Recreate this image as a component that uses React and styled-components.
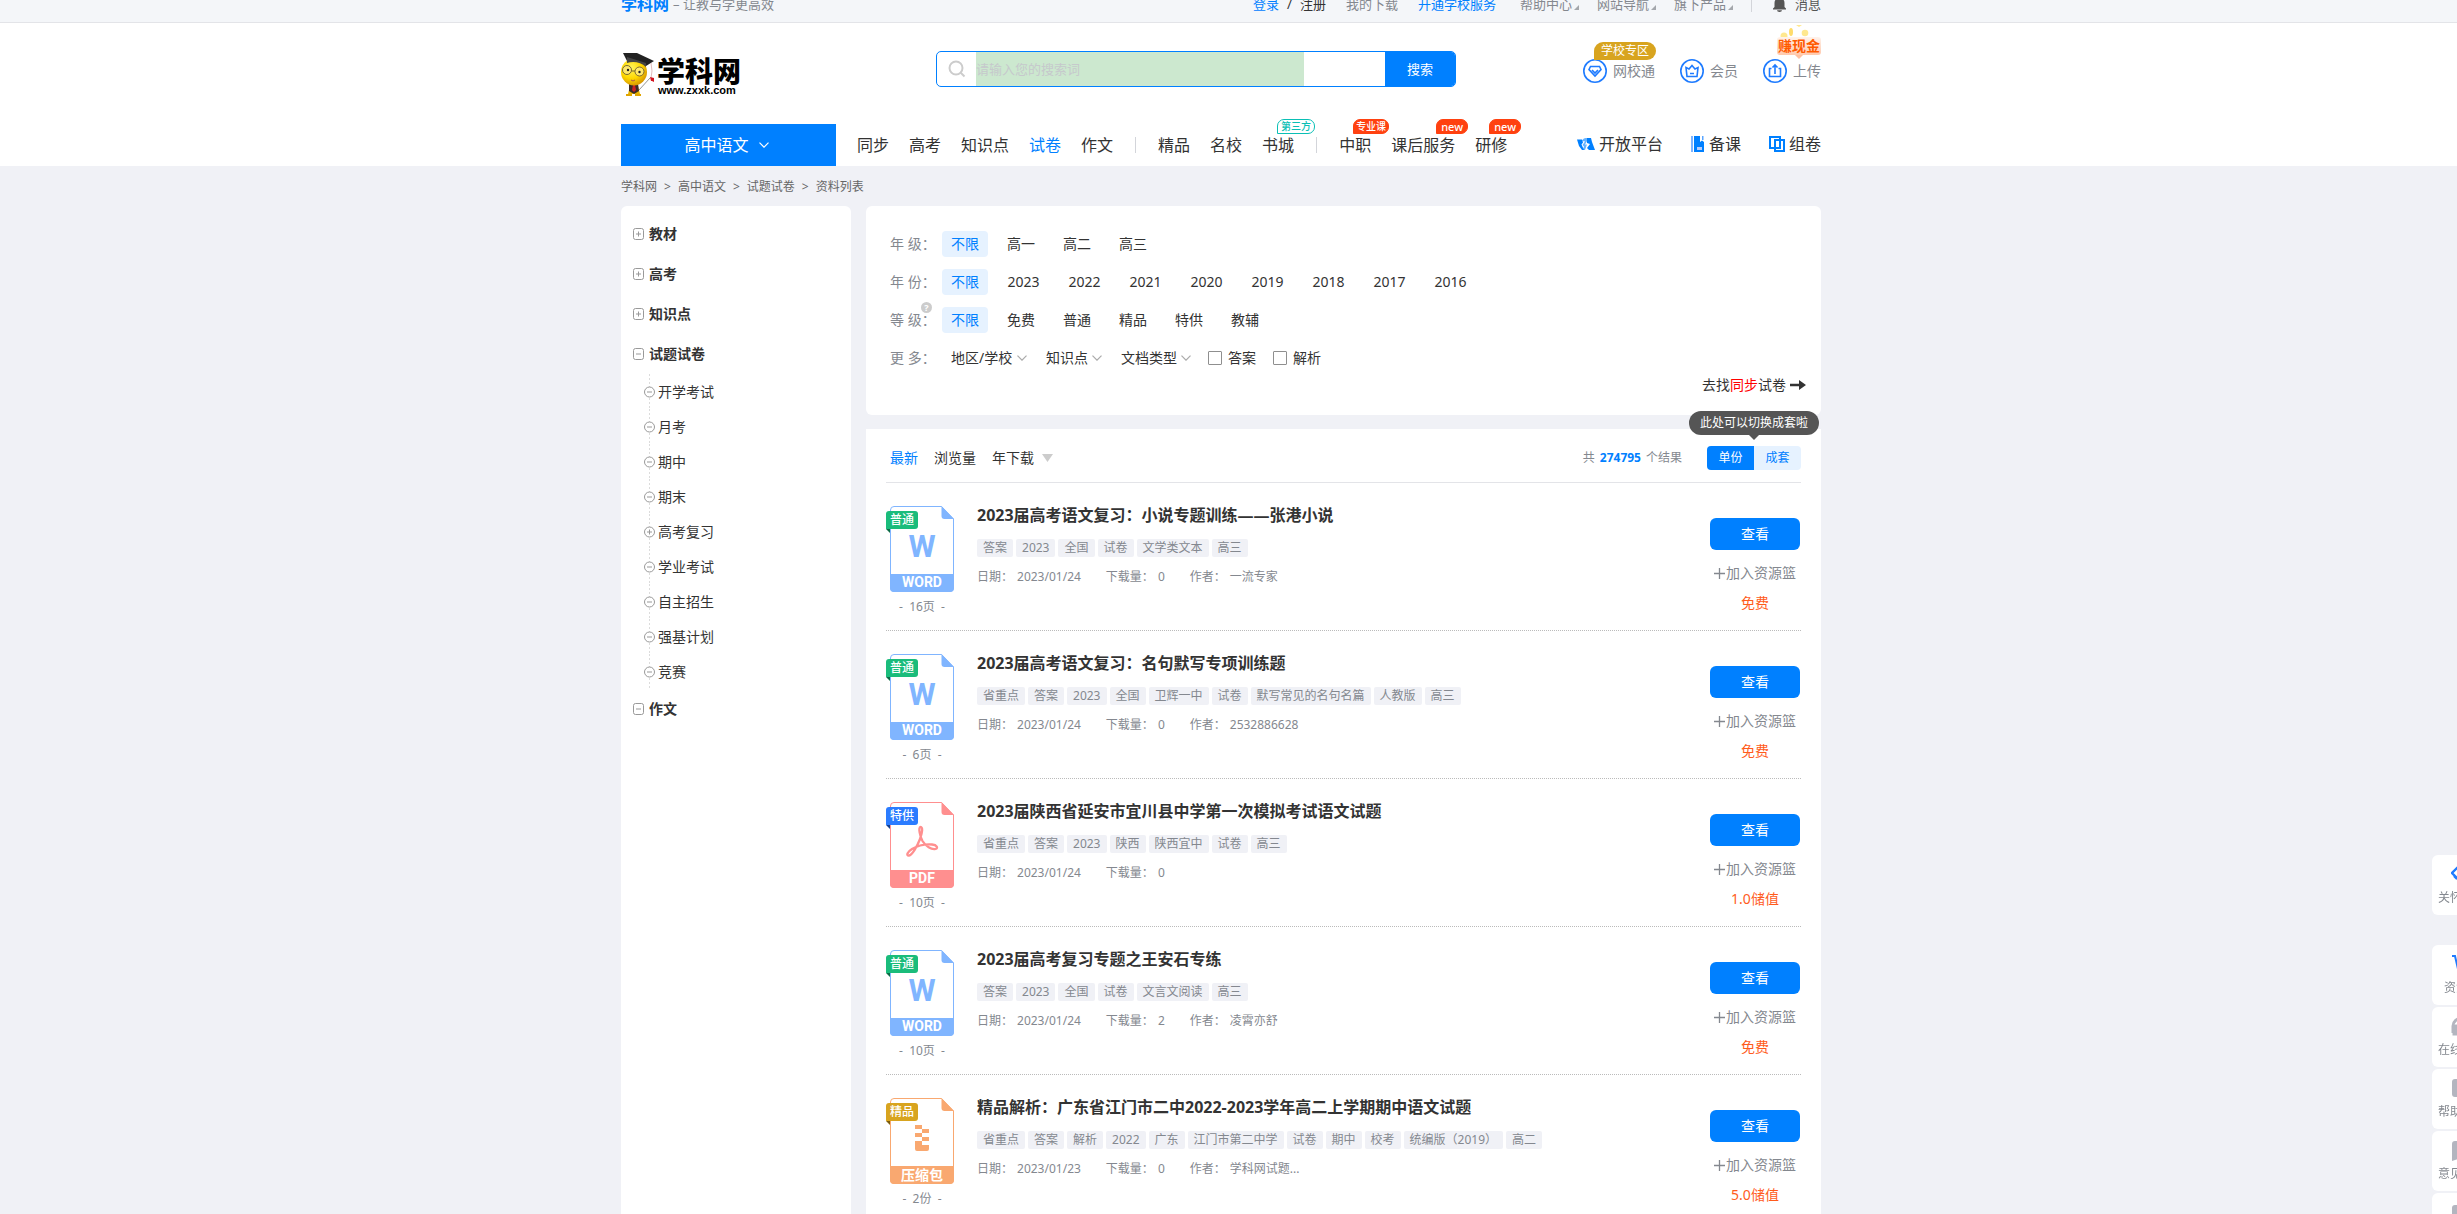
import React, { useState } from 'react';
import styled, { createGlobalStyle, css } from 'styled-components';

const BLUE = '#0080ff';
const INK = '#333333';
const GREY = '#84888f';
const LINE = '#e3e4e8';

const GlobalStyle = createGlobalStyle`
  * { box-sizing: border-box; }
  html { scrollbar-width: none; background: #f0f1f6; }
  body {
    margin: 0;
    color: ${INK};
    font: 14px/20px "Noto Sans", "Noto Sans CJK SC", sans-serif;
    overflow-x: hidden;
  }
  button, input, select { font: inherit; color: inherit; margin: 0; padding: 0; }
  button { border: 0; background: none; cursor: pointer; }
  a { color: inherit; text-decoration: none; }
  ul, ol { list-style: none; margin: 0; padding: 0; }
  h3, p { margin: 0; }
  svg { display: block; flex: none; }
`;

const Band = styled.div`
  padding-right: 15px;
  background: ${(p) => p.$bg || 'transparent'};
`;

const Wrap = styled.div`
  width: 100%;
  max-width: 1200px;
  margin: 0 auto;
`;

/* ---------- top bar ---------- */

const TopBand = styled(Band)`
  border-bottom: 1px solid ${LINE};
  height: 23px;
  overflow: hidden;
`;

const TopRow = styled(Wrap)`
  display: flex;
  justify-content: space-between;
  align-items: center;
  height: 36px;
  margin-top: -14px;
  font-size: 13px;
  color: ${GREY};
`;

const Slogan = styled.div`
  display: flex;
  align-items: center;
  gap: 4px;
`;

const SloganBrand = styled.a`
  font-size: 16px;
  font-weight: 700;
  color: ${BLUE};
`;

const TopLinks = styled.nav`
  display: flex;
  align-items: center;
  gap: 20px;
`;

const TopLink = styled.a`
  color: ${(p) => p.$color || 'inherit'};
`;

const LoginPair = styled.span`
  display: flex;
  gap: 8px;
  color: ${INK};
`;

const MenuGroup = styled.span`
  display: flex;
  align-items: center;
  gap: 18px;
  margin-left: 4px;
`;

const CornerLink = styled.a`
  display: flex;
  align-items: flex-end;
  gap: 2px;
  &::after {
    content: '';
    margin-bottom: 4px;
    border-left: 5px solid transparent;
    border-bottom: 5px solid #a4a7ac;
  }
`;

const Divider = styled.i`
  width: 1px;
  height: 16px;
  background: #d3d5da;
`;

const Notice = styled.a`
  display: flex;
  align-items: center;
  gap: 8px;
  color: #555;
`;

/* ---------- header ---------- */

const HeaderRow = styled(Wrap)`
  display: flex;
  align-items: center;
  height: 101px;
  padding-bottom: 10px;
`;

const Logo = styled.a`
  display: flex;
  width: 315px;
  padding-top: 12px;
`;

const Search = styled.form`
  display: flex;
  width: 520px;
  height: 36px;
  border: 1px solid ${BLUE};
  border-radius: 5px;
  overflow: hidden;
  background: #fff;
`;

const SearchIcon = styled.label`
  display: flex;
  align-items: center;
  justify-content: center;
  width: 39px;
`;

const SearchInput = styled.input`
  width: 328px;
  border: 0;
  outline: 0;
  background: #cce8cf;
  font-size: 13px;
  &::placeholder { color: #c6c9cc; opacity: 1; }
`;

const SearchButton = styled.button`
  width: 70px;
  margin-left: auto;
  background: ${BLUE};
  color: #fff;
  font-size: 13px;
`;

const Services = styled.nav`
  display: flex;
  gap: 25px;
  margin-left: auto;
  padding-top: 4px;
`;

const Service = styled.a`
  position: relative;
  z-index: 0;
  display: flex;
  align-items: center;
  gap: 6px;
  color: ${GREY};
`;

const SchoolBadge = styled.span`
  position: absolute;
  left: 11px;
  top: -17px;
  padding: 0 7px;
  border-radius: 9px 9px 9px 0;
  background: #d8a41f;
  color: #fff;
  font-size: 12px;
  line-height: 18px;
  white-space: nowrap;
`;

const CashBadge = styled.span`
  position: absolute;
  right: 0;
  top: -22px;
  border-radius: 3px;
  background: linear-gradient(#fff3ec, #ffc9ad);
  color: #ff5a00;
  font-size: 14px;
  font-weight: 700;
  line-height: 18px;
  padding: 0 1px;
  white-space: nowrap;
  &::after {
    content: '';
    position: absolute;
    left: 18px;
    top: 18px;
    border: 4px solid transparent;
    border-top-color: #ffc0a0;
    border-bottom: 0;
  }
  svg { position: absolute; left: 0; top: -13px; z-index: -1; }
`;

/* ---------- main nav ---------- */

const NavRow = styled(Wrap)`
  display: flex;
  align-items: stretch;
  height: 42px;
  font-size: 16px;
`;

const SubjectButton = styled.button`
  display: flex;
  align-items: center;
  justify-content: center;
  gap: 10px;
  width: 215px;
  padding-right: 4px;
  background: ${BLUE};
  color: #fff;
`;

const NavList = styled.nav`
  display: flex;
  align-items: center;
  gap: 20px;
  margin-left: 21px;
  ${Divider} { margin: 0 2px; }
`;

const NavLink = styled.a`
  position: relative;
  color: ${(p) => (p.$active ? BLUE : INK)};
`;

const NavBadge = styled.span`
  position: absolute;
  left: ${(p) => p.$left}px;
  top: -16px;
  padding: 0 ${(p) => (p.$teal ? 3 : p.$latin ? 4 : 2)}px;
  border: 1px solid ${(p) => (p.$teal ? '#0abfb5' : '#ff4110')};
  border-radius: 7px 7px 7px 0;
  background: ${(p) => (p.$teal ? '#fff' : '#ff4110')};
  color: ${(p) => (p.$teal ? '#0abfb5' : '#fff')};
  font-size: ${(p) => (p.$latin ? 11 : 10)}px;
  font-weight: 500;
  line-height: 13px;
  white-space: nowrap;
`;

const Tools = styled.nav`
  display: flex;
  align-items: center;
  gap: 28px;
  margin-left: auto;
  padding-bottom: 3px;
`;

const Tool = styled.a`
  display: flex;
  align-items: center;
  gap: 4px;
`;

/* ---------- page body ---------- */

const Crumbs = styled(Wrap)`
  display: flex;
  align-items: center;
  gap: 7px;
  height: 40px;
  padding-top: 2px;
  font-size: 12px;
  color: #666;
`;

const Columns = styled(Wrap)`
  display: flex;
  gap: 15px;
`;

const Sidebar = styled.aside`
  width: 230px;
  flex: none;
  padding: 8px 12px;
  border-radius: 6px;
  background: #fff;
`;

const TreeItem = styled.a`
  display: flex;
  align-items: center;
  gap: 5px;
  height: 40px;
  font-weight: 700;
`;

const TreeSub = styled.a`
  display: flex;
  align-items: center;
  gap: 3px;
  height: 35px;
  margin-left: 11px;
  background: linear-gradient(#dcdcdc 50%, transparent 50%) 5px 0 / 1px 4px repeat-y;
`;

const Main = styled.main`
  flex: 1;
  min-width: 0;
`;

const Filters = styled.section`
  display: flex;
  flex-direction: column;
  gap: 12px;
  height: 209px;
  margin-bottom: 14px;
  padding: 25px 15px 0 24px;
  border-radius: 6px;
  background: #fff;
`;

const FilterRow = styled.div`
  display: flex;
  align-items: center;
  gap: 10px;
  height: 26px;
`;

const FilterLabel = styled.span`
  position: relative;
  width: 42px;
  white-space: nowrap;
  color: ${GREY};
`;

const Help = styled.span`
  position: absolute;
  left: 31px;
  top: -8px;
  width: 11px;
  height: 11px;
  border-radius: 50%;
  background: #ccc;
  color: #fff;
  font-size: 9px;
  font-weight: 700;
  line-height: 11px;
  text-align: center;
`;

const Chip = styled.button`
  min-width: ${(p) => (p.$wide ? 51 : 46)}px;
  height: 26px;
  border-radius: 4px;
  ${(p) => p.$on && css`background: #e6f2ff; color: ${BLUE};`}
`;

const MoreRow = styled(FilterRow)`
  gap: 19px;
`;

const SelectBox = styled.span`
  display: grid;
  align-items: center;
  select {
    grid-area: 1 / 1;
    appearance: none;
    border: 0;
    background: none;
    padding-right: 14px;
    outline: 0;
  }
  svg { grid-area: 1 / 1; justify-self: end; pointer-events: none; }
`;

const Check = styled.label`
  display: flex;
  align-items: center;
  gap: 6px;
  margin-left: -2px;
  input {
    appearance: none;
    width: 14px;
    height: 14px;
    border: 1px solid #8f8f8f;
    border-radius: 1px;
    background: #fff;
  }
  input:checked { background: ${BLUE}; }
`;

const SyncLink = styled.a`
  display: flex;
  align-items: center;
  gap: 4px;
  align-self: flex-end;
  margin-top: -8px;
  em { font-style: normal; color: #ff0000; }
`;

const Results = styled.section`
  padding: 0 20px;
  background: #fff;
`;

const SortBar = styled.div`
  display: flex;
  align-items: center;
  height: 54px;
  padding: 4px 0 0 4px;
  border-bottom: 1px solid ${LINE};
`;

const SortButton = styled.button`
  display: flex;
  align-items: center;
  gap: 8px;
  margin-right: 16px;
  color: ${(p) => (p.$on ? BLUE : INK)};
`;

const Count = styled.p`
  display: flex;
  gap: 5px;
  margin-left: auto;
  margin-right: 25px;
  font-size: 12px;
  color: ${GREY};
  strong { color: ${BLUE}; }
`;

const Segment = styled.div`
  position: relative;
  display: flex;
  border-radius: 4px;
`;

const SegmentButton = styled.button`
  width: 47px;
  height: 24px;
  font-size: 12px;
  background: ${(p) => (p.$on ? BLUE : '#e6f2ff')};
  color: ${(p) => (p.$on ? '#fff' : BLUE)};
  &:first-child { border-radius: 4px 0 0 4px; }
  &:last-of-type { border-radius: 0 4px 4px 0; }
`;

const Tooltip = styled.span`
  position: absolute;
  left: 50%;
  bottom: 35px;
  transform: translateX(-50%);
  padding: 0 11px;
  border-radius: 12px;
  background: #555;
  color: #fff;
  font-size: 12px;
  line-height: 24px;
  white-space: nowrap;
  &::after {
    content: '';
    position: absolute;
    left: 50%;
    top: 24px;
    margin-left: -5px;
    border: 5px solid transparent;
    border-top-color: #555;
    border-bottom: 0;
  }
`;

const Item = styled.li`
  display: flex;
  height: 148px;
  padding: 23px 0 0 4px;
  border-bottom: 1px dotted #bbb;
`;

const Cover = styled.div`
  position: relative;
  width: 64px;
  margin-right: 23px;
  font-size: 12px;
  text-align: center;
  color: ${GREY};
`;

const PageCount = styled.p`
  margin-top: 5px;
  white-space: nowrap;
`;

const Level = styled.span`
  position: absolute;
  left: -4px;
  top: 5px;
  width: 32px;
  border-radius: 3px 3px 3px 0;
  background: ${(p) => p.$c[0]};
  color: #fff;
  font-weight: 500;
  line-height: 18px;
  &::after {
    content: '';
    position: absolute;
    left: 0;
    top: 18px;
    border-top: 4px solid ${(p) => p.$c[1]};
    border-left: 4px solid transparent;
  }
`;

const Info = styled.div`
  flex: 1;
  min-width: 0;
`;

const Title = styled.h3`
  font-size: 16px;
  line-height: 18px;
  font-weight: 700;
`;

const Tags = styled.ul`
  display: flex;
  gap: 3px;
  margin-top: 15px;
`;

const Tag = styled.li`
  padding: 0 6px;
  border-radius: 2px;
  background: #f0f1f6;
  color: ${GREY};
  font-size: 12px;
  line-height: 18px;
`;

const Meta = styled.p`
  display: flex;
  gap: 25px;
  margin-top: 10px;
  font-size: 12px;
  color: ${GREY};
  span { display: flex; gap: 4px; }
`;

const Actions = styled.div`
  display: flex;
  flex-direction: column;
  align-items: center;
  width: 91px;
  padding: 12px 1px 0 0;
`;

const ViewButton = styled.button`
  width: 90px;
  height: 32px;
  border-radius: 6px;
  background: ${BLUE};
  color: #fff;
`;

const AddButton = styled.button`
  display: flex;
  align-items: center;
  gap: 1px;
  margin-top: 13px;
  line-height: 20px;
  color: ${GREY};
`;

const Price = styled.span`
  margin-top: 10px;
  color: #ff5c1c;
`;

/* ---------- floating tools ---------- */

const Dock = styled.div`
  position: fixed;
  right: -35px;
  top: 855px;
  display: flex;
  flex-direction: column;
  gap: 2px;
`;

const DockButton = styled.button`
  display: flex;
  flex-direction: column;
  align-items: center;
  gap: 3px;
  width: 60px;
  height: 60px;
  padding-top: 10px;
  border-radius: 6px;
  background: #fff;
  color: ${GREY};
  font-size: 12px;
  margin-bottom: ${(p) => (p.$apart ? 28 : 0)}px;
`;

/* ---------- drawings ---------- */

const Chevron = ({ color = '#aaa', w = 10, h = 6 }) => (
  <svg width={w} height={h} viewBox="0 0 10 6" fill="none" stroke={color} strokeWidth="1.2">
    <path d="M.5.7 5 5.2 9.5.7" />
  </svg>
);

const Bell = () => (
  <svg width="15" height="15" viewBox="0 0 15 15" fill="#555">
    <path d="M7.500 0a1.200 1.200 0 0 1 1.200 1.300A4.800 4.800 0 0 1 12.500 6v4l1.500 1.500V12.500H1v-1L2.500 10V6a4.800 4.800 0 0 1 3.800-4.700A1.200 1.200 0 0 1 7.500 0zM5 13.200h5a2.500 1.800 0 0 1-5 0z" />
  </svg>
);

const BrandLogo = () => (
  <svg width="120" height="46" viewBox="0 0 120 46" role="img" aria-label="学科网">
    <defs>
      <radialGradient id="face" cx="40%" cy="35%" r="65%">
        <stop offset="0" stopColor="#fff45c" />
        <stop offset=".6" stopColor="#ffd900" />
        <stop offset="1" stopColor="#d99a00" />
      </radialGradient>
    </defs>
    <path d="M9 34h8l2 8H7z" fill="#e8b400" />
    <path d="M8 32h9l1 7-5 3-5-3z" fill="#3a2a28" />
    <path d="M12 33h2l1 5-2 2-2-2z" fill="#c22" />
    <path d="M5 43h6M14 43h6" stroke="#e0a400" strokeWidth="2.200" fill="none" />
    <path d="M18 38l11-12" stroke="#777" strokeWidth=".8" />
    <ellipse cx="13" cy="20" rx="13" ry="13.500" fill="url(#face)" />
    <path d="M2 1 16 1l17 8-8 5C21 9 12 8 6 9z" fill="#222" />
    <path d="M6 5l19 6v4C20 10 12 9 6 11z" fill="#444" />
    <path d="M30 11l1 8-1 7" stroke="#d9a9a9" strokeWidth=".8" fill="none" />
    <path d="M29 25l4 1 0 4-2-1-1 0z" fill="#d3141f" />
    <g fill="#ffe96b" stroke="#6a5a30" strokeWidth=".9">
      <circle cx="6" cy="18" r="4.500" />
      <circle cx="18.500" cy="19.500" r="4.500" />
      <path d="M10.500 19h3.500" />
    </g>
    <circle cx="7" cy="18" r="1.200" fill="#222" />
    <circle cx="18.500" cy="20" r="1.200" fill="#222" />
    <path d="M10 28q2 2 4 0" stroke="#a55" fill="none" />
    <text x="36" y="30" fontFamily="Noto Sans CJK SC" fontWeight="900" fontSize="28">学科网</text>
    <text x="37" y="42" fontFamily="Liberation Sans" fontWeight="700" fontSize="11">www.zxxk.com</text>
  </svg>
);

const Ring = ({ children }) => (
  <svg width="24" height="24" viewBox="0 0 24 24" fill="none" stroke="#1e7bff" strokeWidth="1.600">
    <circle cx="12" cy="12" r="11.200" />
    {children}
  </svg>
);

const Coins = () => (
  <svg width="45" height="20" viewBox="0 0 45 20" fill="#ffe88f">
    <circle cx="7" cy="12" r="3.500" />
    <ellipse cx="14" cy="8" rx="2" ry="4" fill="#ffdc6b" />
    <circle cx="28" cy="9" r="3.300" />
    <path d="M19 1h6l-3 2z" />
  </svg>
);

const OpenIcon = () => (
  <svg width="18" height="14" viewBox="0 0 18 14" fill={BLUE}>
    <path d="M0 2.500h5l1 3-1.500 2L7 13H5L2 9z" />
    <path d="M5 4c1-3 5-4 6-1.500L8 7.500h2L8 13H5.500L7 9.500 5.500 8 8 4.500z" opacity=".6" />
    <path d="M10 1h4l1 4 3 8h-6l-2-2 3-4-3-1z" />
  </svg>
);

const LessonIcon = () => (
  <svg width="14" height="16" viewBox="0 0 14 16">
    <path d="M0 0h2v16H0z" fill="#7fb4ff" />
    <path d="M3 0h6v6l2-1.500L13 6v10H3z" fill={BLUE} />
    <path d="M11 0h1.500v4H11z" fill="#5aa5ff" />
    <path d="M6 11h5v3H6z" fill="#b9cdfa" />
  </svg>
);

const PaperIcon = () => (
  <svg width="16" height="16" viewBox="0 0 16 16" fill="none" stroke={BLUE} strokeWidth="2">
    <path d="M1 1h10v11H1z" />
    <path d="M6 4h9v11H6z" />
  </svg>
);

const TreeMark = ({ round, open }) => (
  <svg width="11" height="12" viewBox="0 0 11 12" fill="#fff" stroke="#999">
    {round ? <circle cx="5.500" cy="6" r="5" /> : <rect x=".5" y=".5" width="10" height="11" rx="2" />}
    <path d={open ? 'M3 6h5' : 'M3 6h5M5.500 3.500v5'} />
  </svg>
);

const DOC = {
  word: { color: '#80b5ff', label: 'WORD' },
  pdf: { color: '#ff8f8f', label: 'PDF' },
  zip: { color: '#f9a870', label: '压缩包' },
};

const DocIcon = ({ type }) => {
  const { color, label } = DOC[type];
  return (
    <svg width="64" height="86" viewBox="0 0 64 86">
      <path d="M4 .5h47.500l12 12.500V82a3.500 3.500 0 0 1-3.500 3.500H4A3.500 3.500 0 0 1 .5 82V4A3.500 3.500 0 0 1 4 .5z" fill="#fff" stroke={color} />
      <path d="M51.500 0 64 13H54.500a3 3 0 0 1-3-3z" fill={color} />
      <path d="M0 68h64v14a4 4 0 0 1-4 4H4a4 4 0 0 1-4-4z" fill={color} />
      {type === 'word' && (
        <text x="32" y="51" textAnchor="middle" fontFamily="Roboto" fontWeight="700" fontSize="31" fill={color}>W</text>
      )}
      {type === 'pdf' && (
        <path
          d="M30.500 25c2.500 0 2 5-.5 12-3 8-8 16-11 16.500-3 .3-2-3.500 3-6.500 6-3.500 14-5 20-4.500 5 .5 6.500 3.500 3.500 4.500-4 1-10-3-13-8-2.500-4.500-4.500-14-2-14z"
          fill="none"
          stroke={color}
          strokeWidth="2.300"
        />
      )}
      {type === 'zip' && (
        <path d="M25 27h7v4h-7zM32 31h7v4h-7zM25 35h7v4h-7zM32 39h7v4h-7zM25 43h7v4h7v4a2 2 0 0 1-2 2H27a2 2 0 0 1-2-2z" fill={color} />
      )}
      <text
        x="32"
        y={type === 'zip' ? 82 : 81}
        textAnchor="middle"
        fontFamily={type === 'zip' ? 'Noto Sans CJK SC' : 'Roboto'}
        fontWeight="700"
        fontSize="14"
        fill="#fff"
      >
        {label}
      </text>
    </svg>
  );
};

const dockIcons = {
  code: <path d="M8 1 1 8l7 7M3 11l3 3M14 1l7 7-7 7" fill="none" stroke="#1e7bff" strokeWidth="2.400" />,
  cart: <path d="M1 1h3l3 13h11l2-8H6" fill="none" stroke="#1e7bff" strokeWidth="2" />,
  head: <path d="M2 16V9a9 8 0 0 1 18 0v7M3 9v8h3V9zM16 9v8h3V9z" fill="none" stroke="#b3b5bf" strokeWidth="3" />,
  help: <rect x="1" y="0" width="20" height="18" rx="3" fill="#b3b5bf" />,
  note: <path d="M1 3a3 3 0 0 1 3-3h14a3 3 0 0 1 3 3v15H7l-6 2z" fill="#b3b5bf" />,
  top: <rect x="1" y="2" width="20" height="16" rx="3" fill="#b3b5bf" />,
};

/* ---------- content ---------- */

const LEVELS = {
  普通: ['#1abc7b', '#0b6b45'],
  特供: ['#2b7cff', '#123f8f'],
  精品: ['#d8a41f', '#7c5c0b'],
};

const FILTERS = [
  { label: '年 级：', options: ['不限', '高一', '高二', '高三'] },
  { label: '年 份：', wide: true, options: ['不限', '2023', '2022', '2021', '2020', '2019', '2018', '2017', '2016'] },
  { label: '等 级：', help: true, options: ['不限', '免费', '普通', '精品', '特供', '教辅'] },
];

const TREE = [
  { name: '教材' },
  { name: '高考' },
  { name: '知识点' },
  {
    name: '试题试卷',
    open: true,
    children: ['开学考试', '月考', '期中', '期末', '高考复习', '学业考试', '自主招生', '强基计划', '竞赛'],
  },
  { name: '作文', open: true },
];

const ITEMS = [
  { type: 'word', level: '普通', pages: '16页', title: '2023届高考语文复习：小说专题训练——张港小说', tags: ['答案', '2023', '全国', '试卷', '文学类文本', '高三'], date: '2023/01/24', downloads: 0, author: '一流专家', price: '免费' },
  { type: 'word', level: '普通', pages: '6页', title: '2023届高考语文复习：名句默写专项训练题', tags: ['省重点', '答案', '2023', '全国', '卫辉一中', '试卷', '默写常见的名句名篇', '人教版', '高三'], date: '2023/01/24', downloads: 0, author: '2532886628', price: '免费' },
  { type: 'pdf', level: '特供', pages: '10页', title: '2023届陕西省延安市宜川县中学第一次模拟考试语文试题', tags: ['省重点', '答案', '2023', '陕西', '陕西宜中', '试卷', '高三'], date: '2023/01/24', downloads: 0, price: '1.0储值' },
  { type: 'word', level: '普通', pages: '10页', title: '2023届高考复习专题之王安石专练', tags: ['答案', '2023', '全国', '试卷', '文言文阅读', '高三'], date: '2023/01/24', downloads: 2, author: '凌霄亦舒', price: '免费' },
  { type: 'zip', level: '精品', pages: '2份', title: '精品解析：广东省江门市二中2022-2023学年高二上学期期中语文试题', tags: ['省重点', '答案', '解析', '2022', '广东', '江门市第二中学', '试卷', '期中', '校考', '统编版（2019）', '高二'], date: '2023/01/23', downloads: 0, author: '学科网试题...', price: '5.0储值' },
];

const NAV = [
  { name: '同步' }, { name: '高考' }, { name: '知识点' }, { name: '试卷', active: true }, { name: '作文' },
  null,
  { name: '精品' }, { name: '名校' }, { name: '书城', badge: '第三方', teal: true, left: 15 },
  null,
  { name: '中职', badge: '专业课', left: 14 },
  { name: '课后服务', badge: 'new', latin: true, left: 45 },
  { name: '研修', badge: 'new', latin: true, left: 14 },
];

const CRUMBS = ['学科网', '高中语文', '试题试卷', '资料列表'];

const DOCK = [
  { icon: 'code', name: '关怀模式', apart: true },
  { icon: 'cart', name: '资源篮' },
  { icon: 'head', name: '在线客服' },
  { icon: 'help', name: '帮助中心' },
  { icon: 'note', name: '意见反馈' },
  { icon: 'top', name: '返回顶部' },
];

function FilterGroup({ label, help, wide, options }) {
  const [picked, setPicked] = useState(options[0]);
  return (
    <FilterRow>
      <FilterLabel>{label}{help && <Help>?</Help>}</FilterLabel>
      {options.map((o, i) => (
        <Chip key={o} type="button" $on={o === picked} $wide={wide && i > 0} onClick={() => setPicked(o)}>{o}</Chip>
      ))}
    </FilterRow>
  );
}

function Picker({ name }) {
  return (
    <SelectBox>
      <select aria-label={name}><option>{name}</option></select>
      <Chevron />
    </SelectBox>
  );
}

function ResultItem({ item }) {
  return (
    <Item>
      <Cover>
        <DocIcon type={item.type} />
        <Level $c={LEVELS[item.level]}>{item.level}</Level>
        <PageCount>-&nbsp; {item.pages} &nbsp;-</PageCount>
      </Cover>
      <Info>
        <Title><a href="#item">{item.title}</a></Title>
        <Tags>{item.tags.map((t) => <Tag key={t}>{t}</Tag>)}</Tags>
        <Meta>
          <span><span>日期：</span><span>{item.date}</span></span>
          <span><span>下载量：</span><span>{item.downloads}</span></span>
          {item.author && <span><span>作者：</span><span>{item.author}</span></span>}
        </Meta>
      </Info>
      <Actions>
        <ViewButton type="button">查看</ViewButton>
        <AddButton type="button">
          <svg width="11" height="11" viewBox="0 0 11 11" stroke={GREY} strokeWidth="1.300"><path d="M0 5.500h11M5.500 0v11" /></svg>
          加入资源篮
        </AddButton>
        <Price>{item.price}</Price>
      </Actions>
    </Item>
  );
}

export default function App() {
  const [mode, setMode] = useState('单份');
  return (
    <>
      <GlobalStyle />
      <TopBand $bg="#f4f6f9">
        <TopRow>
          <Slogan><SloganBrand href="#home">学科网</SloganBrand>– 让教与学更高效</Slogan>
          <TopLinks>
            <LoginPair><TopLink href="#login" $color={BLUE}>登录</TopLink>/<TopLink href="#join">注册</TopLink></LoginPair>
            <TopLink href="#downloads">我的下载</TopLink>
            <TopLink href="#school" $color={BLUE}>开通学校服务</TopLink>
            <MenuGroup>
              {['帮助中心', '网站导航', '旗下产品'].map((t) => <CornerLink key={t} href="#menu">{t}</CornerLink>)}
              <Divider />
            </MenuGroup>
            <Notice href="#news"><Bell />消息</Notice>
          </TopLinks>
        </TopRow>
      </TopBand>

      <Band $bg="#fff" as="header">
        <HeaderRow>
          <Logo href="#home"><BrandLogo /></Logo>
          <Search onSubmit={(e) => e.preventDefault()}>
            <SearchIcon htmlFor="q" aria-label="搜索">
              <svg width="18" height="18" viewBox="0 0 18 18" fill="none" stroke="#ccc" strokeWidth="2"><circle cx="8" cy="8" r="6.500" /><path d="m12.500 12.500 4 4" /></svg>
            </SearchIcon>
            <SearchInput id="q" placeholder="请输入您的搜索词" />
            <SearchButton type="submit">搜索</SearchButton>
          </Search>
          <Services>
            <Service href="#wxt">
              <Ring><path d="M7.500 7.500h9l1.500 3-6 6.500-6-6.500zM9 11l3 3 3-3" /></Ring>
              网校通
              <SchoolBadge>学校专区</SchoolBadge>
            </Service>
            <Service href="#vip">
              <Ring><path d="m6 8.500 3 1.500 3-3.500 3 3.500 3-1.500-1 9H7zM10 14.500h4" /></Ring>
              会员
            </Service>
            <Service href="#upload">
              <Ring><path d="M8.500 9.500H6.500v8h11v-8h-2M12 15V6M9.500 8.500 12 6l2.500 2.500" /></Ring>
              上传
              <CashBadge><Coins />赚现金</CashBadge>
            </Service>
          </Services>
        </HeaderRow>
        <NavRow>
          <SubjectButton type="button">高中语文<Chevron color="#fff" /></SubjectButton>
          <NavList>
            {NAV.map((n, i) => (n ? (
              <NavLink key={n.name} href="#nav" $active={n.active}>
                {n.name}
                {n.badge && <NavBadge $teal={n.teal} $latin={n.latin} $left={n.left}>{n.badge}</NavBadge>}
              </NavLink>
            ) : <Divider key={i} />))}
          </NavList>
          <Tools>
            <Tool href="#open"><OpenIcon />开放平台</Tool>
            <Tool href="#lesson"><LessonIcon />备课</Tool>
            <Tool href="#paper"><PaperIcon />组卷</Tool>
          </Tools>
        </NavRow>
      </Band>

      <Band>
        <Crumbs>
          {CRUMBS.map((c, i) => (
            <React.Fragment key={c}>
              {i > 0 && <span>&gt;</span>}
              <a href="#crumb">{c}</a>
            </React.Fragment>
          ))}
        </Crumbs>
        <Columns>
          <Sidebar>
            {TREE.map((t) => (
              <React.Fragment key={t.name}>
                <TreeItem href="#tree"><TreeMark open={t.open} />{t.name}</TreeItem>
                {(t.children || []).map((c) => (
                  <TreeSub key={c} href="#tree"><TreeMark round open={c !== '高考复习'} />{c}</TreeSub>
                ))}
              </React.Fragment>
            ))}
          </Sidebar>
          <Main>
            <Filters>
              {FILTERS.map((f) => <FilterGroup key={f.label} {...f} />)}
              <MoreRow>
                <FilterLabel>更 多：</FilterLabel>
                <Picker name="地区/学校" />
                <Picker name="知识点" />
                <Picker name="文档类型" />
                <Check><input type="checkbox" />答案</Check>
                <Check><input type="checkbox" />解析</Check>
              </MoreRow>
              <SyncLink href="#sync">
                <span>去找<em>同步</em>试卷</span>
                <svg width="16" height="12" viewBox="0 0 16 12" fill={INK}><path d="M0 4.800h9V1l7 5-7 5V7.200H0z" /></svg>
              </SyncLink>
            </Filters>
            <Results>
              <SortBar>
                <SortButton type="button" $on>最新</SortButton>
                <SortButton type="button">浏览量</SortButton>
                <SortButton type="button">
                  年下载
                  <svg width="11" height="8" viewBox="0 0 11 8" fill="#ccc"><path d="M0 0h11L5.500 8z" /></svg>
                </SortButton>
                <Count><span>共</span><strong>274795</strong><span>个结果</span></Count>
                <Segment>
                  {['单份', '成套'].map((m) => (
                    <SegmentButton key={m} type="button" $on={m === mode} onClick={() => setMode(m)}>{m}</SegmentButton>
                  ))}
                  <Tooltip>此处可以切换成套啦</Tooltip>
                </Segment>
              </SortBar>
              <ul>{ITEMS.map((item) => <ResultItem key={item.title} item={item} />)}</ul>
            </Results>
          </Main>
        </Columns>
      </Band>

      <Dock>
        {DOCK.map((d) => (
          <DockButton key={d.name} type="button" $apart={d.apart}>
            <svg width="22" height="20" viewBox="0 0 22 20">{dockIcons[d.icon]}</svg>
            {d.name}
          </DockButton>
        ))}
      </Dock>
    </>
  );
}
